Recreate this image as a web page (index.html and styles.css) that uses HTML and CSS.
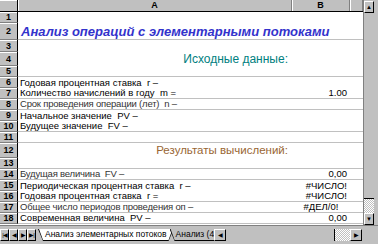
FILE: index.html
```html
<!DOCTYPE html>
<html lang="ru">
<head>
    <meta charset="UTF-8">
    <title>Анализ операций с элементарными потоками</title>
    <link rel="stylesheet" href="styles.css">
</head>
<body>
    <div class="window">
        <div class="main">
            <div class="sheet">
                <div class="row head">
                    <div class="rh corner"></div>
                    <div class="ch col-a">A</div>
                    <div class="ch col-b">B</div>
                    <div class="ch col-c"></div>
                </div>
                <div class="row r1"><div class="rh">1</div><div class="cell col-a"></div><div class="cell col-b"></div><div class="cell col-c"></div></div>
                <div class="row r2 line"><div class="rh">2</div><div class="cell col-a title">Анализ операций с элементарными потоками</div><div class="cell col-b"></div><div class="cell col-c"></div></div>
                <div class="row r3"><div class="rh">3</div><div class="cell col-a"></div><div class="cell col-b"></div><div class="cell col-c"></div></div>
                <div class="row r4"><div class="rh">4</div><div class="cell col-a section input">Исходные данные:</div><div class="cell col-b"></div><div class="cell col-c"></div></div>
                <div class="row line"><div class="rh">5</div><div class="cell col-a"></div><div class="cell col-b"></div><div class="cell col-c"></div></div>
                <div class="row"><div class="rh">6</div><div class="cell col-a">Годовая процентная ставка &nbsp;r –</div><div class="cell col-b"></div><div class="cell col-c"></div></div>
                <div class="row line"><div class="rh">7</div><div class="cell col-a">Количество начислений в году &nbsp;m =</div><div class="cell col-b num">1.00</div><div class="cell col-c"></div></div>
                <div class="row line"><div class="rh">8</div><div class="cell col-a thin">Срок проведения операции (лет) &nbsp;n –</div><div class="cell col-b"></div><div class="cell col-c"></div></div>
                <div class="row"><div class="rh">9</div><div class="cell col-a">Начальное значение &nbsp;PV –</div><div class="cell col-b"></div><div class="cell col-c"></div></div>
                <div class="row line"><div class="rh">10</div><div class="cell col-a">Будущее значение &nbsp;FV –</div><div class="cell col-b"></div><div class="cell col-c"></div></div>
                <div class="row line"><div class="rh">11</div><div class="cell col-a"></div><div class="cell col-b"></div><div class="cell col-c"></div></div>
                <div class="row r12"><div class="rh">12</div><div class="cell col-a section result">Результаты вычислений:</div><div class="cell col-b"></div><div class="cell col-c"></div></div>
                <div class="row line"><div class="rh">13</div><div class="cell col-a"></div><div class="cell col-b"></div><div class="cell col-c"></div></div>
                <div class="row line"><div class="rh">14</div><div class="cell col-a thin">Будущая величина &nbsp;FV –</div><div class="cell col-b num">0,00</div><div class="cell col-c"></div></div>
                <div class="row"><div class="rh">15</div><div class="cell col-a">Периодическая процентная ставка &nbsp;r –</div><div class="cell col-b num">#ЧИСЛО!</div><div class="cell col-c"></div></div>
                <div class="row line"><div class="rh">16</div><div class="cell col-a">Годовая процентная ставка &nbsp;r =</div><div class="cell col-b num">#ЧИСЛО!</div><div class="cell col-c"></div></div>
                <div class="row line"><div class="rh">17</div><div class="cell col-a thin">Общее число периодов проведения оп –</div><div class="cell col-b err">#ДЕЛ/0!</div><div class="cell col-c"></div></div>
                <div class="row line"><div class="rh">18</div><div class="cell col-a">Современная величина &nbsp;PV –</div><div class="cell col-b num">0,00</div><div class="cell col-c"></div></div>
            </div>
            <div class="vscroll">
                <div class="sbtn">&#9650;</div>
                <div class="thumb"></div>
                <div class="track"></div>
                <div class="sbtn">&#9660;</div>
            </div>
        </div>
        <div class="tabbar">
            <div class="nav">
                <div class="nbtn">|&#9664;</div>
                <div class="nbtn">&#9664;</div>
                <div class="nbtn">&#9654;</div>
                <div class="nbtn">&#9654;|</div>
            </div>
            <div class="tabs">
                <div class="tab active"><span>Анализ элементарных потоков</span></div>
                <div class="tab short"><span>Анализ (4)</span></div>
            </div>
            <div class="hscroll">
                <div class="sbtn">&#9664;</div>
                <div class="hthumb"></div>
                <div class="htrack"></div>
                <div class="sbtn">&#9654;</div>
            </div>
            <div class="grip"></div>
        </div>
    </div>
</body>
</html>
```

FILE: styles.css
```css
* {
    box-sizing: border-box;
}
body {
    margin: 0;
    font-family: "Liberation Sans", Arial, sans-serif;
    background-color: #fff;
}
.window {
    width: 378px;
    height: 244px;
    display: flex;
    flex-direction: column;
    overflow: hidden;
    background-color: #c0c0c0;
}
.main {
    display: flex;
    height: 225px;
}
.sheet {
    width: 363px;
    background-color: #fff;
    overflow: hidden;
}
.row {
    display: flex;
    height: 11px;
    font-size: 9.5px;
    line-height: 10px;
}
.row.head {
    height: 12px;
    border-bottom: 1px solid #000;
}
.r2 { height: 17px; }
.r3 { height: 12px; }
.r4 { height: 14px; }
.r12 { height: 15px; }
.rh {
    width: 18px;
    flex: none;
    background-color: #c0c0c0;
    border-right: 1px solid #000;
    border-bottom: 1px solid #808080;
    box-shadow: inset 0 1px #fff;
    font-size: 9px;
    font-weight: bold;
    display: flex;
    align-items: center;
    justify-content: center;
}
.rh.corner {
    border-bottom: none;
}
.ch {
    background-color: #c0c0c0;
    border-right: 1px solid #808080;
    box-shadow: inset 1px 0 #fff;
    font-size: 9px;
    font-weight: bold;
    text-align: center;
    line-height: 11px;
}
.col-a { width: 274px; flex: none; }
.col-b { width: 58px; flex: none; }
.col-c { width: 13px; flex: none; }
.cell {
    white-space: nowrap;
    overflow: hidden;
    padding: 0 2px;
    display: flex;
    align-items: center;
}
.line .cell {
    border-bottom: 1px solid #c0c0c0;
}
.title {
    overflow: visible;
    color: #3333cc;
    font-size: 13px;
    font-weight: bold;
    font-style: italic;
    line-height: 15px;
    padding-left: 3px;
}
.section {
    justify-content: flex-end;
    font-size: 12px;
    line-height: 13px;
    padding-right: 4px;
}
.input { color: #008080; }
.result {
    color: #996633;
    font-size: 11.5px;
}
.thin {
    color: #333;
    letter-spacing: -0.2px;
}
.num {
    justify-content: flex-end;
    padding-right: 3px;
}
.err {
    justify-content: center;
}
.vscroll {
    width: 15px;
    display: flex;
    flex-direction: column;
    padding: 1px 4px 0 0;
    border-left: 1px solid #808080;
}
.sbtn {
    height: 12px;
    flex: none;
    background-color: #c0c0c0;
    border: 1px solid;
    border-color: #fff #000 #000 #fff;
    font-size: 6px;
    line-height: 10px;
    text-align: center;
}
.vscroll .thumb {
    height: 186px;
    background-color: #c0c0c0;
    border-bottom: 1px solid #000;
}
.vscroll .track,
.hscroll .htrack {
    flex: 1;
    background: repeating-conic-gradient(#c0c0c0 0 25%, #fff 0 50%) 0 0 / 2px 2px;
}
.tabbar {
    display: flex;
    height: 16px;
    padding-top: 3px;
    border-top: 1px solid #808080;
    background-color: #c0c0c0;
}
.nav {
    display: flex;
    width: 38px;
    flex: none;
}
.nbtn {
    width: 9px;
    height: 12px;
    font-size: 6px;
    line-height: 10px;
    text-align: center;
    border: 1px solid;
    border-color: #fff #000 #000 #fff;
    letter-spacing: -1px;
}
.tabs {
    display: flex;
    width: 176px;
    flex: none;
    overflow: hidden;
}
.tab {
    height: 12px;
    background-color: #000;
    clip-path: polygon(0 0, 100% 0, calc(100% - 5px) 100%, 5px 100%);
    padding-bottom: 1px;
    margin-right: -4px;
    flex: none;
}
.tab span {
    display: block;
    height: 11px;
    padding: 0 7px;
    font-size: 8.5px;
    line-height: 10px;
    white-space: nowrap;
    background-color: #c0c0c0;
    clip-path: polygon(1px 0, calc(100% - 1px) 0, calc(100% - 5px) 100%, 5px 100%);
}
.tab.active span {
    background-color: #fff;
}
.tab.short span {
    padding-left: 6px;
}
.hscroll {
    display: flex;
    width: 148px;
    flex: none;
}
.hscroll .sbtn {
    width: 12px;
}
.hthumb {
    width: 109px;
    flex: none;
    background-color: #c0c0c0;
    border-right: 1px solid #000;
}
.grip {
    flex: 1;
}
```
